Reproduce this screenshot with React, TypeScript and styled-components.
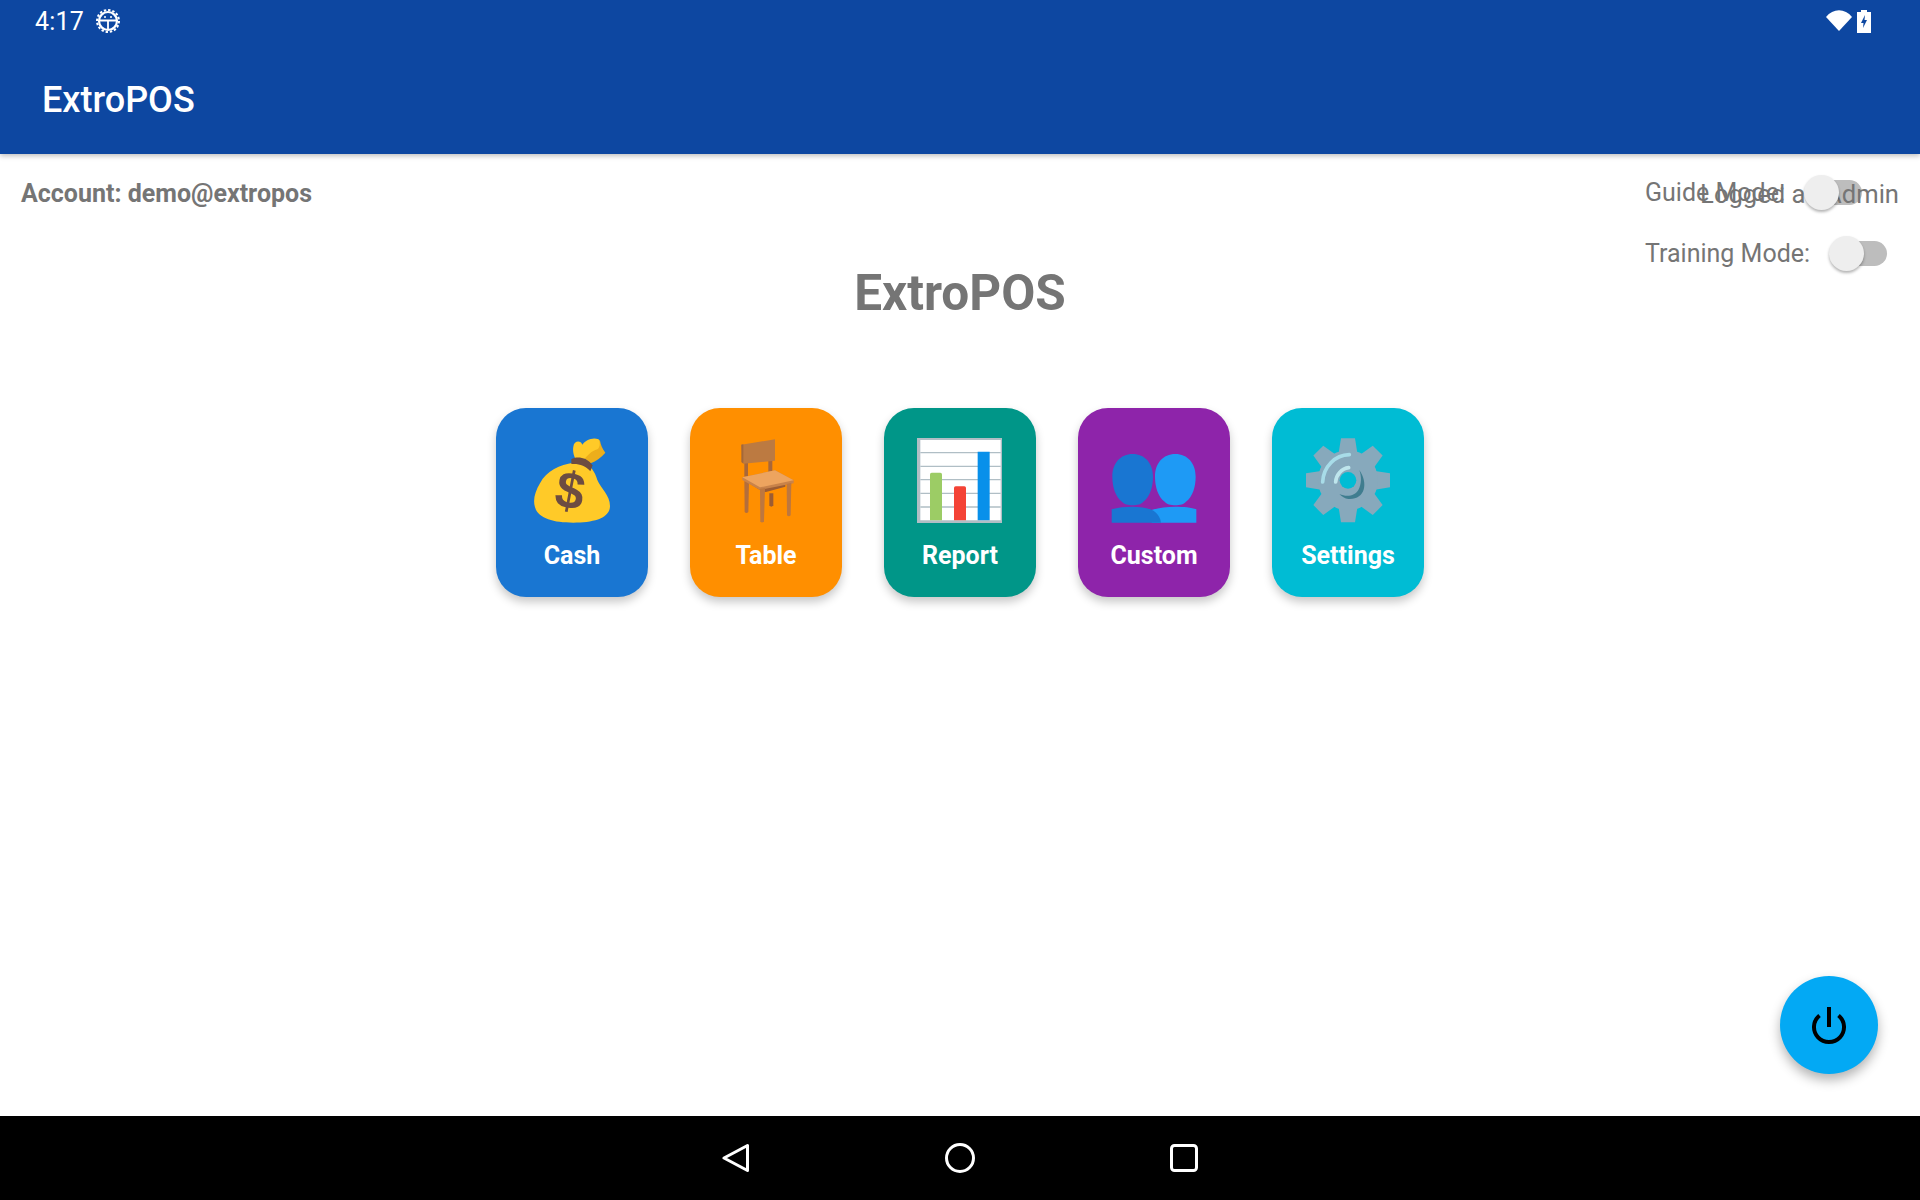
import { FC, ReactNode } from "react"
import styled, { createGlobalStyle } from "styled-components"

const Global = createGlobalStyle`
  html, body { margin: 0; height: 100%; background: #fff; }
  #root { height: 100%; }
  * { box-sizing: border-box; }
`

const Screen = styled.div`
  height: 1200px;
  display: flex;
  flex-direction: column;
  font-family: Roboto, "Liberation Sans", sans-serif;
  overflow: hidden;
`

const AppBar = styled.header`
  height: 154px;
  background: #0d47a1;
  color: #fff;
  box-shadow: 0 2px 5px rgba(0, 0, 0, 0.25);
  position: relative;
  z-index: 1;
  flex: none;
`

const StatusBar = styled.div`
  height: 42px;
  padding: 0 49px 0 35px;
  display: flex;
  align-items: center;
  justify-content: space-between;
`

const StatusGroup = styled.div<{ $gap: number }>`
  display: flex;
  align-items: center;
  gap: ${(p) => p.$gap}px;
  font-size: 25px;
  letter-spacing: 0.2px;
`

const Toolbar = styled.div`
  height: 112px;
  padding: 4px 0 0 42px;
  display: flex;
  align-items: center;
  font-size: 36px;
  font-weight: 500;
`

const Body = styled.main`
  flex: 1;
  position: relative;
  color: #757575;
`

const TopRow = styled.div`
  display: flex;
  justify-content: space-between;
  align-items: flex-start;
  padding: 20px 33px 0 21px;
`

const Account = styled.div`
  margin-top: 1px;
  font-size: 25px;
  line-height: 38px;
  font-weight: 700;
`

const Modes = styled.div`
  display: flex;
  flex-direction: column;
  gap: 25px;
  width: 242px;
`

const ModeRow = styled.div`
  display: flex;
  align-items: center;
  gap: 20px;
  height: 36px;
  font-size: 25px;
  white-space: nowrap;
`

const Track = styled.span`
  position: relative;
  width: 57px;
  height: 25px;
  border-radius: 13px;
  background: #bdbdbd;
  flex: none;
`

// the thumb sits above the "Logged as" text, the track below it
const Thumb = styled.span`
  position: absolute;
  z-index: 2;
  left: -1px;
  top: -5px;
  width: 35px;
  height: 35px;
  border-radius: 50%;
  background: #eeeeee;
  box-shadow: 0 2px 3px rgba(0, 0, 0, 0.3);
`

const LoggedAs = styled.div`
  position: absolute;
  z-index: 1;
  top: 21px;
  right: 21px;
  font-size: 25.6px;
  line-height: 38px;
  white-space: nowrap;
`

const Title = styled.h1`
  margin: 0;
  margin-top: -8px;
  text-align: center;
  font-size: 49.5px;
  line-height: 60px;
  font-weight: 700;
`

const Tiles = styled.div`
  margin-top: 85px;
  display: flex;
  justify-content: center;
  gap: 42px;
`

const Tile = styled.div<{ $bg: string }>`
  width: 152px;
  height: 189px;
  padding-top: 30px;
  border-radius: 30px;
  background: ${(p) => p.$bg};
  box-shadow: 0 5px 10px rgba(0, 0, 0, 0.22);
  display: flex;
  flex-direction: column;
  align-items: center;
  color: #fff;
`

const TileLabel = styled.span`
  margin-top: 14px;
  font-size: 25px;
  line-height: 36px;
  font-weight: 700;
`

const Fab = styled.button`
  position: absolute;
  right: 42px;
  bottom: 42px;
  width: 98px;
  height: 98px;
  padding: 0;
  border: 0;
  border-radius: 50%;
  background: #03a9f4;
  box-shadow: 0 6px 12px rgba(0, 0, 0, 0.3);
  display: flex;
`

const NavBar = styled.nav`
  height: 84px;
  flex: none;
  background: #000;
  display: flex;
  align-items: center;
  justify-content: center;
  gap: 194px;
`

const MoneyBag: FC = () => (
  <svg width="86" height="86" viewBox="57 54 258 258">
    <path d="M222 78C235 60 262 50 270 62C272 72 276 85 286 98C275 112 258 124 242 130L218 112Z" fill="#ECAE1B" />
    <path d="M190 80C192 62 212 60 217 74C226 60 250 50 265 58C272 68 270 82 262 88C245 92 232 108 222 118L196 116C190 104 188 92 190 80Z" fill="#FFCA28" />
    <path d="M190 128C150 135 110 150 90 190C75 215 68 240 75 262C85 295 130 308 190 308C250 308 300 295 300 258C300 225 272 205 262 180C255 155 240 135 222 130Z" fill="#FFCA28" />
    <path d="M184 118C198 108 230 110 248 136L241 154C226 136 206 130 184 132Z" fill="#6D4C41" />
    <text
      x="180"
      y="265"
      textAnchor="middle"
      fontFamily="'Liberation Sans', sans-serif"
      fontWeight="700"
      fontSize="155"
      fill="#6D4C41"
      transform="rotate(11 180 215)"
    >
      $
    </text>
  </svg>
)

const Chair: FC = () => (
  <svg width="86" height="86" viewBox="39 54 258 258">
    <path d="M103 128H114V170H103ZM175 118H187V160H175Z" fill="#A8673A" />
    <path d="M178 220H190V256Q184 264 178 256Z" fill="#9C5C33" />
    <path d="M94 74L195 58V122L100 131Z" fill="#BC7A41" />
    <path d="M94 74L100 73V131L94 126Z" fill="#A3683A" />
    <path d="M103 184H117L115 276Q109 282 104 276Z" fill="#B36E3C" />
    <path d="M117 190L150 210V216H168L226 200V192L117 186Z" fill="#9C5C33" />
    <path d="M97 172L195 151L251 181V190L150 210L97 180Z" fill="#C9834A" />
    <path d="M97 172L195 151L251 181L150 202Z" fill="#EDA45F" />
    <path d="M150 206L165 204L162 304Q156 311 151 304Z" fill="#BD773F" />
    <path d="M230 192L244 188L242 286Q236 292 231 286Z" fill="#BD773F" />
  </svg>
)

const BarChart: FC = () => (
  <svg width="86" height="86" viewBox="51 39 258 258">
    <path d="M51 39H306V294H51Z" fill="#B0BEC5" />
    <path d="M61 45H302V286H61Z" fill="#fff" />
    <path d="M61 81H302V85H61ZM61 122H302V126H61ZM61 162H302V166H61ZM61 203H302V207H61ZM61 244H302V248H61Z" fill="#B0BEC5" />
    <path d="M90 148Q90 143 95 143H121Q126 143 126 148V286H90Z" fill="#9CCC65" />
    <path d="M162 189Q162 184 167 184H193Q198 184 198 189V286H162Z" fill="#F44336" />
    <path d="M233 80H269V286H233Z" fill="#0890EA" />
  </svg>
)

const People: FC = () => (
  <svg width="86" height="86" viewBox="48 24 258 258">
    <path d="M170 240C195 232 215 230 241 230C265 230 290 232 304 238V278H170Z" fill="#1E9AF5" />
    <path d="M241 72C278 72 302 100 302 140C302 170 293 200 273 215C263 229 219 229 209 215C189 200 180 170 180 140C180 100 204 72 241 72Z" fill="#1E9AF5" />
    <path d="M50 238C68 232 90 230 113 230C150 230 192 236 198 278H50Z" fill="#1976D2" />
    <path d="M113 72C150 72 174 100 174 140C174 170 165 200 145 215C135 229 91 229 81 215C61 200 52 170 52 140C52 100 76 72 113 72Z" fill="#1976D2" />
  </svg>
)

const Gear: FC = () => (
  <svg width="86" height="86" viewBox="45 54 258 258">
    {[0, 45, 90, 135, 180, 225, 270, 315].map((a) => (
      <polygon key={a} points="153,55 195,55 203,105 145,105" fill="#87A9BC" transform={`rotate(${a} 174 181)`} />
    ))}
    <circle cx="174" cy="181" r="90" fill="#87A9BC" />
    <circle cx="174" cy="181" r="25" fill="#00BCD4" />
    <path d="M208 150C236 190 225 240 175 237C165 236 155 230 148 222C170 232 195 228 205 210C215 192 215 170 208 150Z" fill="#3F7D8F" />
    <path d="M98 186C100 140 135 105 178 104" fill="none" stroke="#A8DCE8" strokeWidth="11" strokeLinecap="round" />
    <path d="M137 186C138 165 155 145 176 143" fill="none" stroke="#BEE5EC" strokeWidth="11" strokeLinecap="round" />
  </svg>
)

const BugGear: FC = () => (
  <svg width="24" height="24" viewBox="0 0 24 24">
    <circle cx="12" cy="12" r="9" fill="none" stroke="#fff" strokeWidth="2.2" />
    <circle cx="12" cy="12" r="11" fill="none" stroke="#fff" strokeWidth="2" strokeDasharray="2.4 1.9" />
    <path d="M4 11.5H20M12 11.5V20" stroke="#fff" strokeWidth="1.8" />
    <circle cx="9" cy="8" r="1" fill="#fff" />
    <circle cx="15" cy="8" r="1" fill="#fff" />
  </svg>
)

const Wifi: FC = () => (
  <svg width="26" height="22" viewBox="0 0 26 22">
    <path d="M0 7C7 -2 19 -2 26 7L13 21Z" fill="#fff" />
  </svg>
)

const Battery: FC = () => (
  <svg width="14" height="23" viewBox="0 0 14 23">
    <path d="M4 0H10V2H14V23H0V2H4Z" fill="#fff" />
    <path d="M8 5L4 13H6.5L6 18L10 10H7.5Z" fill="#0d47a1" />
  </svg>
)

const PowerIcon: FC = () => (
  <svg width="98" height="98" viewBox="0 0 98 98">
    <path d="M49 31V51" stroke="#000" strokeWidth="4" fill="none" />
    <path d="M39.5 39.5A15 15 0 1 0 58.500 39.500" stroke="#000" strokeWidth="4" fill="none" />
  </svg>
)

const BackIcon: FC = () => (
  <svg width="28" height="30" viewBox="0 0 28 30">
    <path d="M25.500 2.500V27.500L2 15Z" fill="none" stroke="#fff" strokeWidth="3" strokeLinejoin="round" />
  </svg>
)

const HomeIcon: FC = () => (
  <svg width="32" height="32" viewBox="0 0 32 32">
    <circle cx="16" cy="16" r="13.500" fill="none" stroke="#fff" strokeWidth="3" />
  </svg>
)

const RecentIcon: FC = () => (
  <svg width="28" height="28" viewBox="0 0 28 28">
    <rect x="1.500" y="1.500" width="25" height="25" rx="3" fill="none" stroke="#fff" strokeWidth="3" />
  </svg>
)

const Toggle: FC = () => (
  <Track>
    <Thumb />
  </Track>
)

const tiles: { label: string; bg: string; icon: ReactNode }[] = [
  { label: "Cash", bg: "#1976d2", icon: <MoneyBag /> },
  { label: "Table", bg: "#ff8f00", icon: <Chair /> },
  { label: "Report", bg: "#009688", icon: <BarChart /> },
  { label: "Custom", bg: "#8e24aa", icon: <People /> },
  { label: "Settings", bg: "#00bcd4", icon: <Gear /> },
]

const App: FC = () => (
  <Screen>
    <Global />
    <AppBar>
      <StatusBar>
        <StatusGroup $gap={12}>
          4:17
          <BugGear />
        </StatusGroup>
        <StatusGroup $gap={5}>
          <Wifi />
          <Battery />
        </StatusGroup>
      </StatusBar>
      <Toolbar>ExtroPOS</Toolbar>
    </AppBar>
    <Body>
      <LoggedAs>Logged as Admin</LoggedAs>
      <TopRow>
        <Account>Account: demo@extropos</Account>
        <Modes>
          <ModeRow>
            Guide Mode:
            <Toggle />
          </ModeRow>
          <ModeRow>
            Training Mode:
            <Toggle />
          </ModeRow>
        </Modes>
      </TopRow>
      <Title>ExtroPOS</Title>
      <Tiles>
        {tiles.map((t) => (
          <Tile key={t.label} $bg={t.bg}>
            {t.icon}
            <TileLabel>{t.label}</TileLabel>
          </Tile>
        ))}
      </Tiles>
      <Fab aria-label="Power">
        <PowerIcon />
      </Fab>
    </Body>
    <NavBar>
      <BackIcon />
      <HomeIcon />
      <RecentIcon />
    </NavBar>
  </Screen>
)

export default App
